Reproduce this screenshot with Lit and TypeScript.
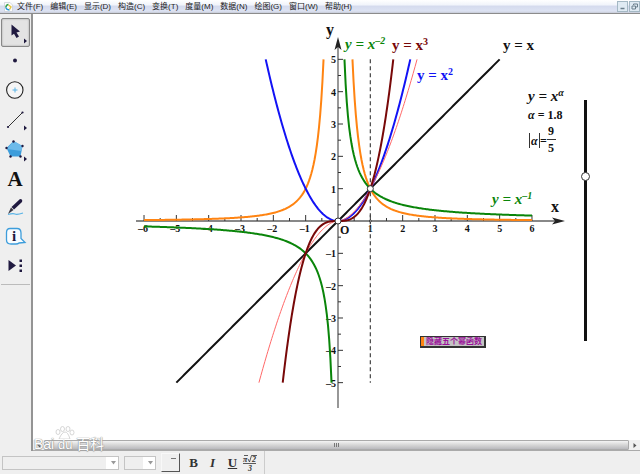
import { LitElement, html, svg, css } from "lit";
import { customElement, state } from "lit/decorators.js";

const UNIT = 32.33;

function curve(fn: (x: number) => number, from: number, to: number): string {
  const steps = 160;
  let d = "";
  for (let i = 0; i <= steps; i++) {
    const x = from + ((to - from) * i) / steps;
    d += `${i ? "L" : "M"}${(x * UNIT).toFixed(2)} ${(-fn(x) * UNIT).toFixed(2)}`;
  }
  return d;
}

const MENUS = ["文件(F)", "编辑(E)", "显示(D)", "构造(C)", "变换(T)", "度量(M)", "数据(N)", "绘图(G)", "窗口(W)", "帮助(H)"];

@customElement("function-plot")
export class FunctionPlot extends LitElement {
  static styles = css`
    :host { display: block; position: absolute; inset: 0; }
    svg { display: block; width: 100%; height: 100%; font-family: "Liberation Serif", serif; font-weight: bold; }
    .axis { stroke: #606060; stroke-width: 1.3; fill: none; }
    .tick { stroke: #333; stroke-width: 1; }
    .arrow { fill: #222; }
    .dash { stroke: #444; stroke-width: 1.2; stroke-dasharray: 4 3; }
    .num { font-size: 10px; fill: #111; }
    .name { font-size: 15px; fill: #111; }
    .axis-name { font-size: 16px; fill: #111; }
    .origin { font-size: 12px; }
    .small { font-size: 12px; fill: #111; }
    .sup { font-size: 10px; }
    .it { font-style: italic; }
    .mid { text-anchor: middle; }
    .end { text-anchor: end; }
    .c { fill: none; stroke-width: 2; }
    .orange { stroke: #ff8412; }
    .green { stroke: #0a850a; }
    .blue { stroke: #1212f5; }
    .red { stroke: #780808; }
    .pink { stroke: #ff6868; stroke-width: 1; }
    .black { stroke: #111; }
    .name.t-green { fill: #0a850a; }
    .name.t-red { fill: #780808; }
    .name.t-blue { fill: #1212f5; }
    .dot { fill: #fff; stroke: #333; stroke-width: 1; }
  `;

  private ticks() {
    const out = [];
    for (let h = -12; h <= 12; h++) {
      if (h === 0) continue;
      const p = (h / 2) * UNIT;
      const whole = h % 2 === 0;
      out.push(svg`<line class="tick" x1=${p} x2=${p} y1="0" y2=${whole ? -6 : -3}></line>`);
      if (whole) {
        const label = String(h / 2).replace("-", "–");
        out.push(svg`<text class="num mid" x=${h < 0 ? p - 1 : p} y="11">${label}</text>`);
      }
      if (Math.abs(h) <= 10) {
        out.push(svg`<line class="tick" y1=${-p} y2=${-p} x1="0" x2=${whole ? 5 : 3}></line>`);
        if (whole) {
          const label = String(h / 2).replace("-", "–");
          out.push(svg`<text class="num end" x="-2" y=${-p + 4}>${label}</text>`);
        }
      }
    }
    return out;
  }

  render() {
    const inv = (x: number) => 1 / x;
    const inv2 = (x: number) => 1 / (x * x);
    const r2 = Math.sqrt(5);
    const r3 = Math.cbrt(5);
    const ra = Math.pow(5, 1 / 1.8);
    return html`
      <svg role="img" aria-label="y = x^α">
        <g transform="translate(305 207)">
          <line class="axis" x1="-202" x2="218" y1="0" y2="0"></line>
          <line class="axis" x1="0" x2="0" y1="-174" y2="187"></line>
          <path class="arrow" d="M227 0L214 -3.5L217 0L214 3.5Z"></path>
          <path class="arrow" d="M0 -184L-3.5 -171L0 -174L3.5 -171Z"></path>
          ${this.ticks()}
          <line class="dash" x1=${UNIT} x2=${UNIT} y1=${-5 * UNIT} y2=${5 * UNIT}></line>
          <path class="c orange" d=${curve(inv2, -6, -1 / r2)}></path>
          <path class="c orange" d=${curve(inv2, 1 / r2, 6)}></path>
          <path class="c green" d=${curve(inv, -6, -0.2)}></path>
          <path class="c green" d=${curve(inv, 0.2, 6)}></path>
          <path class="c black" d=${curve((x) => x, -5, 5)}></path>
          <path class="c blue" d=${curve((x) => x * x, -r2, r2)}></path>
          <path class="c pink" d=${curve((x) => Math.sign(x) * Math.pow(Math.abs(x), 1.8), -ra, ra)}></path>
          <path class="c red" d=${curve((x) => x * x * x, -r3, r3)}></path>
          <circle class="dot" r="3"></circle>
          <circle class="dot" cx=${UNIT} cy=${-UNIT} r="3"></circle>
          <circle class="dot" cx=${UNIT} cy="0" r="1"></circle>
          <text class="small origin" x="2" y="13">O</text>
          <text class="axis-name" x="-12" y="-186">y</text>
          <text class="axis-name" x="213" y="-9">x</text>
          <text class="name t-green it" x="7" y="-172">y = x<tspan class="sup" dy="-5">–2</tspan></text>
          <text class="name t-red" x="54" y="-171">y = x<tspan class="sup" dy="-5">3</tspan></text>
          <text class="name t-blue" x="79" y="-141">y = x<tspan class="sup" dy="-5">2</tspan></text>
          <text class="name" x="165" y="-171">y = x</text>
          <text class="name t-green it" x="154" y="-17">y = x<tspan class="sup" dy="-5">–1</tspan></text>
          <text class="name it" x="190" y="-120">y = x<tspan class="sup" dy="-5">α</tspan></text>
          <text class="small" x="190" y="-102"><tspan class="it">α</tspan> = 1.8</text>
          <text class="small it" x="193" y="-76">α</text>
          <text class="small" x="202" y="-76">=</text>
          <text class="small mid" x="213" y="-86">9</text>
          <text class="small mid" x="213" y="-69">5</text>
          <path class="tick" d="M191.500 -88V-73M201.500 -88V-73M209 -81.500H218"></path>
        </g>
      </svg>
    `;
  }
}

@customElement("app-root")
export class AppRoot extends LitElement {
  @state() private tool = 0;

  static styles = css`
    :host {
      display: flex; flex-direction: column; min-height: 100vh; box-sizing: border-box;
      background: #efefef; color: #222; overflow: hidden;
      font-family: "Liberation Sans", "Noto Sans CJK SC", sans-serif; font-size: 8px;
    }
    button { font: inherit; color: inherit; padding: 0; margin: 0; border: 0; background: none; }
    svg { display: block; }
    .menubar {
      display: flex; align-items: center; height: 14px; box-sizing: border-box; padding-left: 4px;
      background: linear-gradient(#fff 0, #f2f5fb 35%, #d5dbee 50%, #dde3f3 85%, #c6cad6); border-bottom: 1px solid #8c8c8c;
    }
    .items { display: flex; gap: 7px; margin-left: 4px; flex: 1; }
    .items button { line-height: 12px; white-space: nowrap; }
    .win { width: 11px; height: 11px; border: 1px solid #a4b8c4; background: #dfeaf3; margin-left: 1px; }
    .main { display: flex; flex: 1; }
    .tools {
      width: 33px; box-sizing: border-box; border-right: 2px solid #949494; background: #efefef;
      padding: 4px 1px 0; display: flex; flex-direction: column; gap: 2px;
    }
    .group { display: flex; flex-direction: column; }
    .tool { width: 29px; height: 29px; box-sizing: border-box; border: 1px solid transparent; border-radius: 2px; }
    .tool.on { border: 1px solid #888; background: #e3e3e3; box-shadow: inset 0 0 2px #999; }
    .rule { border: 0; border-top: 1px solid #bbb; width: 100%; margin: 3px 0 0; }
    .view { flex: 1; min-width: 0; display: flex; flex-direction: column; position: relative; }
    .canvas { flex: 1; min-height: 424px; background: #fff; position: relative; overflow: hidden; }
    .slider {
      position: absolute; left: 547px; top: 86px; width: 11px; height: 241px; margin: 0;
      appearance: none; writing-mode: vertical-lr; direction: rtl;
      background: linear-gradient(#111, #111) center / 3px 100% no-repeat;
    }
    .slider::-webkit-slider-thumb {
      appearance: none; width: 9px; height: 9px; box-sizing: border-box; border-radius: 50%;
      background: #fff; border: 1px solid #333;
    }
    .hide {
      position: absolute; left: 387px; top: 322px; height: 12px; box-sizing: border-box; padding: 0 2px 0 5px;
      border: 1px solid #333; border-right-width: 2px; border-bottom-width: 2px; background: #c4c4c4;
      box-shadow: inset 3px 0 #ff8412;
      color: #9a109a; font-weight: bold; line-height: 9px; white-space: nowrap;
    }
    .scroll {
      height: 10px; display: flex; align-items: center; background: #f0f0f0; border-bottom: 1px solid #aaa;
    }
    .scroll button { width: 11px; height: 10px; display: grid; place-items: center; }
    .thumb {
      flex: 1; height: 10px; box-sizing: border-box; border: 1px solid #aaa; border-radius: 1px;
      background: linear-gradient(#f4f4f4, #d6d6d6 50%, #b9b9bd); display: grid; place-items: center;
    }
    .mark {
      position: absolute; left: 1px; bottom: 0; display: flex; align-items: flex-end; pointer-events: none;
      color: #fff; font-size: 14px; line-height: 14px; gap: 1px;
      text-shadow: 0 0 1px #888, 0 0 1px #999, 0 1px 1px #aaa;
    }
    .du { display: flex; flex-direction: column; align-items: center; font-size: 13px; line-height: 12px; }
    .format { display: flex; align-items: center; height: 23px; padding-left: 2px; background: #efefef; }
    select {
      appearance: none; height: 14px; box-sizing: border-box; border: 1px solid #c4c4c4; margin: 0 5px 0 0;
      background: linear-gradient(90deg, #efefef, #efefef) left / calc(100% - 12px) 100% no-repeat, #fff;
    }
    .pick { position: relative; display: flex; }
    .pick svg { position: absolute; right: 8px; top: 5px; pointer-events: none; }
    .family { width: 117px; }
    .size { width: 32px; }
    .swatch { width: 19px; height: 19px; box-sizing: border-box; border: 1px solid #f8f8f8; border-right: 1px solid #555; border-bottom: 1px solid #555; display: flex; justify-content: flex-end; padding: 4px 3px 0 0; }
    .swatch i { width: 5px; height: 1px; background: #777; }
    .fmt { width: 19px; font-family: "Liberation Serif", serif; font-size: 13px; font-weight: bold; color: #333; line-height: 18px; }
    .b { margin-left: 4px; }
    .i { font-style: italic; }
    .u { text-decoration: underline; margin-left: 1px; }
    .m { width: 16px; }
    .sep { width: 1px; height: 100%; background: #ccc; margin-left: 6px; }
  `;

  private toolButton(index: number, label: string, icon: unknown) {
    return html`<button class="tool ${this.tool === index ? "on" : ""}" aria-label=${label}
      @click=${() => (this.tool = index)}><svg width="27" height="27" viewBox="0 0 27 27">${icon}</svg></button>`;
  }

  render() {
    const more = svg`<path d="M22 19.500L25 22L22 24.500Z" fill="#201a40"></path>`;
    return html`
      <nav class="menubar">
        <svg width="9" height="10" viewBox="0 0 9 10">
          <path d="M.5 .5H6L8.500 3V9.500H.5Z" fill="#fcfcfc" stroke="#c5ccd4" stroke-width=".7"></path>
          <path d="M4.500 2.500A2.500 2.500 0 0 0 2 5.500" fill="none" stroke="#36a04d" stroke-width="1.600"></path>
          <path d="M2 5.500A2.500 2.500 0 0 0 5.500 7.500" fill="none" stroke="#2596d8" stroke-width="1.600"></path>
          <path d="M4.500 3L7 5L5.500 7.500" fill="none" stroke="#e5c744" stroke-width="1.400"></path>
        </svg>
        <div class="items">${MENUS.map((m) => html`<button>${m}</button>`)}</div>
        <button class="win" aria-label="最小化"><svg width="9" height="9"><path d="M2.500 6.500H6.500" stroke="#6b7f8c" stroke-width="1.500"></path></svg></button>
        <button class="win" aria-label="还原"><svg width="9" height="9"><path d="M3.500 3V2H7.500V5H6M2 4H5.500V7H2Z" fill="none" stroke="#6b7f8c"></path></svg></button>
      </nav>
      <div class="main">
        <aside class="tools">
          <div class="group">
            ${this.toolButton(0, "移动箭头工具", svg`<path d="M9.500 5.500V16.500L12 14.700L14.500 19L17 17.500L14.500 13.500L18 12.500Z" fill="#201a40"></path>${more}`)}
            ${this.toolButton(1, "点工具", svg`<circle cx="13" cy="12.500" r="2" fill="#201a40"></circle>`)}
            ${this.toolButton(2, "圆工具", svg`<circle cx="12.800" cy="13" r="8.200" fill="#f5f5f5" stroke="#222" stroke-width="1.100"></circle><path d="M10.500 13H15.500M13 10.500V15.500" stroke="#58b3e6"></path>`)}
            ${this.toolButton(3, "线段直尺工具", svg`<path d="M6 21L20.500 6.500" stroke="#333"></path><circle cx="6" cy="21" r="1.100" fill="#201a40"></circle><circle cx="20.500" cy="6.500" r="1.100" fill="#201a40"></circle>${more}`)}
          </div>
          <div class="group">
            ${this.toolButton(4, "多边形工具", svg`<path d="M11.500 4L20.500 9L18.500 19.500H8.500L4.500 11Z" fill="#3d9ddb"></path><path d="M11.500 4L20.500 9L19.500 14L5 12Z" fill="#6dbaea"></path><g fill="#201a40"><circle cx="11.500" cy="4.500" r="1.200"></circle><circle cx="20.500" cy="9" r="1.200"></circle><circle cx="18.500" cy="19.500" r="1.200"></circle><circle cx="8.500" cy="19.500" r="1.200"></circle><circle cx="4.500" cy="11" r="1.200"></circle></g>${more}`)}
            ${this.toolButton(5, "文字工具", svg`<text x="13" y="20" text-anchor="middle" font-family="Liberation Serif, serif" font-weight="bold" font-size="21" fill="#111">A</text>`)}
            ${this.toolButton(6, "标记工具", svg`<path d="M6 19.500Q11 18 13 19T21 18" fill="none" stroke="#58b3e6" stroke-width="1.200"></path><path d="M18 4Q21 4 20 7L12 14.500L9.500 12Z" fill="#201a40"></path><path d="M9 12.500L11.500 15L6 19Z" fill="#3b3844"></path>`)}
            ${this.toolButton(7, "信息工具", svg`<path d="M8 4.500H15Q19 4.500 19 9V14.500L23 18.500L17 19Q16 20 14 20H9Q4.500 20 4.500 16V8.500Q4.500 4.500 8 4.500Z" fill="#f8fcff" stroke="#3d9ddb" stroke-width="1.300"></path><text x="12" y="17" text-anchor="middle" font-family="Liberation Serif, serif" font-weight="bold" font-size="15" fill="#201a40">i</text>`)}
            ${this.toolButton(8, "自定义工具", svg`<path d="M6.500 7L14 12.500L6.500 18Z" fill="#201a40"></path><path d="M17.500 6.500H20V9H17.500ZM17.500 11.500H20V14H17.500ZM17.500 16.500H20V19H17.500Z" fill="#201a40"></path>`)}
            <hr class="rule" />
          </div>
        </aside>
        <section class="view">
          <div class="canvas">
            <function-plot></function-plot>
            <input class="slider" type="range" min="0" max="100" value="69" aria-label="α" />
            <button class="hide">隐藏五个幂函数</button>
          </div>
          <div class="scroll">
            <button aria-label="向左"><svg width="4" height="5"><path d="M3.500 0V5L.5 2.500Z" fill="#555"></path></svg></button>
            <div class="thumb"><svg width="6" height="4"><path d="M.5 0V4M2.500 0V4M4.500 0V4" stroke="#777"></path></svg></div>
            <button aria-label="向右"><svg width="4" height="5"><path d="M.5 0V5L3.500 2.500Z" fill="#555"></path></svg></button>
          </div>
          <div class="mark">
            <span>Bai</span>
            <span class="du">
              <svg width="20" height="13" viewBox="0 0 20 13" fill="#fff" stroke="#ccc" stroke-width=".8"><ellipse cx="3" cy="6" rx="2" ry="2.500"></ellipse><ellipse cx="7.500" cy="3" rx="2" ry="2.500"></ellipse><ellipse cx="13" cy="3" rx="2" ry="2.500"></ellipse><ellipse cx="17" cy="6.500" rx="2" ry="2.500"></ellipse><path d="M10 6Q13 6 15 13H4Q7 6 10 6Z"></path></svg>
              du
            </span>
            <span>百科</span>
          </div>
        </section>
      </div>
      <footer class="format">
        <span class="pick"><select class="family" aria-label="字体"></select><svg width="5" height="4"><path d="M0 0H5L2.500 3.500Z" fill="#999"></path></svg></span>
        <span class="pick"><select class="size" aria-label="字号"></select><svg width="5" height="4"><path d="M0 0H5L2.500 3.500Z" fill="#999"></path></svg></span>
        <button class="swatch" aria-label="颜色"><i></i></button>
        <button class="fmt b">B</button>
        <button class="fmt i">I</button>
        <button class="fmt u">U</button>
        <button class="fmt m" aria-label="数学符号"><svg width="16" height="18" viewBox="0 0 16 18" font-family="Liberation Serif, serif" font-style="italic" fill="#333"><text x="1" y="8" font-size="8">π</text><text x="10" y="8" font-size="8">2</text><path d="M6 5L7.500 8L9.500 1.500H15M1 9.500H14M2 1.500H6" fill="none" stroke="#333" stroke-width=".8"></path><text x="6" y="17" font-size="8">3</text></svg></button>
        <span class="sep"></span>
      </footer>
    `;
  }
}
